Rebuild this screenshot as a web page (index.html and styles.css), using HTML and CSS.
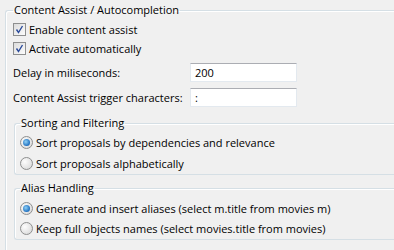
FILE: index.html
```html
<!DOCTYPE html>
<html lang="en">
<head>
    <meta charset="UTF-8">
    <title>Content Assist</title>
    <link rel="stylesheet" href="styles.css">
</head>
<body>
    <fieldset class="group outer">
        <legend>Content Assist / Autocompletion</legend>

        <label class="check-row">
            <span class="check">
                <svg width="13" height="13" viewBox="0 0 13 13"><path d="M3.5 6.5 L5.5 9.5 L9.5 3" fill="none" stroke="#2a4a9a" stroke-width="1.4"/></svg>
            </span>
            Enable content assist
        </label>
        <label class="check-row">
            <span class="check">
                <svg width="13" height="13" viewBox="0 0 13 13"><path d="M3.5 6.5 L5.5 9.5 L9.5 3" fill="none" stroke="#2a4a9a" stroke-width="1.4"/></svg>
            </span>
            Activate automatically
        </label>

        <div class="field-row first">
            <span>Delay in miliseconds:</span>
            <div class="text-input">200</div>
        </div>
        <div class="field-row">
            <span>Content Assist trigger characters:</span>
            <div class="text-input">:</div>
        </div>

        <fieldset class="group inner sorting">
            <legend>Sorting and Filtering</legend>
            <label class="radio-row"><span class="radio on"></span>Sort proposals by dependencies and relevance</label>
            <label class="radio-row"><span class="radio"></span>Sort proposals alphabetically</label>
        </fieldset>

        <fieldset class="group inner alias">
            <legend>Alias Handling</legend>
            <label class="radio-row"><span class="radio on"></span>Generate and insert aliases (select m.title from movies m)</label>
            <label class="radio-row"><span class="radio"></span>Keep full objects names (select movies.title from movies)</label>
        </fieldset>
    </fieldset>
</body>
</html>
```

FILE: styles.css
```css
body {
    margin: 0;
    width: 394px;
    height: 250px;
    background: #f0f0f0;
    font-family: "Open Sans", sans-serif;
    font-size: 11px;
    color: #000;
    overflow: hidden;
}
.group {
    border: 1px solid #d5dfe5;
    border-right: none;
    border-radius: 3px 0 0 3px;
    box-shadow: inset 1px 1px 0 #fff;
    margin: 0;
    min-width: 0;
}
.group legend {
    line-height: 16px;
    padding: 0 1px;
}
.outer {
    margin: 2px 0 0 5px;
    height: 248px;
    box-sizing: border-box;
    border-bottom: none;
    border-radius: 3px 0 0 0;
    padding: 2px 0 0 7px;
}
.inner {
    margin-left: 1px;
    padding: 1px 0 0 5px;
}
.sorting {
    margin-top: 8px;
    padding-bottom: 1px;
}
.alias {
    margin-top: 5px;
    padding-top: 2px;
    padding-bottom: 1px;
}
.check-row {
    display: flex;
    align-items: center;
    gap: 2px;
    height: 19px;
}
.check {
    width: 11px;
    height: 11px;
    border: 1px solid #8e8f8f;
    background: linear-gradient(135deg, #dcdcdc, #fcfcfc);
    display: flex;
    align-items: center;
    justify-content: center;
    margin-right: 1px;
}
.check svg {
    flex: none;
}
.field-row {
    display: grid;
    grid-template-columns: 177px 107px;
    align-items: center;
    margin-top: 6px;
}
.field-row.first {
    margin-top: 5px;
}
.text-input {
    height: 19px;
    box-sizing: border-box;
    background: #fff;
    border: 1px solid #e3e9ef;
    border-top-color: #abadb3;
    padding-left: 4px;
    line-height: 17px;
}
.radio-row {
    display: flex;
    align-items: center;
    gap: 3px;
    height: 20px;
}
.sorting .radio-row + .radio-row {
    margin-top: 1px;
}
.radio {
    width: 11px;
    height: 11px;
    border: 1px solid #8e8f8f;
    border-radius: 50%;
    background: radial-gradient(circle at 35% 35%, #fdfdfd, #d4d4d4);
    display: inline-block;
    position: relative;
}
.radio.on::after {
    content: "";
    position: absolute;
    left: 2px;
    top: 2px;
    width: 7px;
    height: 7px;
    border-radius: 50%;
    background: radial-gradient(circle at 40% 40%, #8fd1f7, #1e6fbf 70%, #134a8a);
}
```
